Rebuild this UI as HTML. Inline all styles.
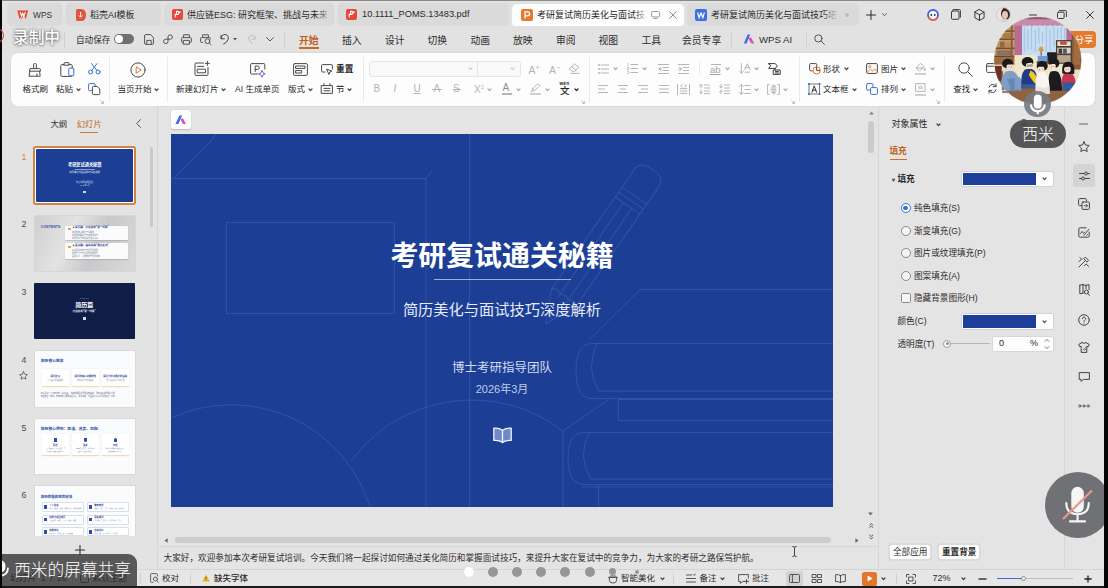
<!DOCTYPE html>
<html lang="zh-CN">
<head>
<meta charset="utf-8">
<title>WPS</title>
<style>
*{box-sizing:border-box;margin:0;padding:0}
html,body{width:1108px;height:588px;overflow:hidden;background:#e5e4e4}
body{font-family:"Liberation Sans","Noto Sans CJK SC",sans-serif;color:#222;position:relative;font-size:9px}
.abs{position:absolute}
.t{position:absolute;white-space:nowrap;line-height:1}
svg{position:absolute;overflow:visible}
/* frame */
#edgeL{left:0;top:0;width:2px;height:588px;background:#050505}
#edgeR{left:1104px;top:0;width:4px;height:588px;background:#050505}
#edgeT{left:0;top:0;width:1108px;height:1px;background:#8a8a8a}
#edgeB{left:0;top:586px;width:1108px;height:2px;background:#1a1a1a}
#titlebar{left:2px;top:1px;width:1102px;height:27px;background:#e3e2e2}
#menubar{left:2px;top:28px;width:1102px;height:25px;background:#e3e2e2}
#ribbon{left:11px;top:52.500px;width:1083.700px;height:53px;background:#fdfdfd;border-radius:7px;box-shadow:0 0 2px rgba(0,0,0,.12)}
/* slide */
#slide{left:171px;top:134px;width:662px;height:373px;background:#1c3f95;overflow:hidden}

.chip{position:absolute;top:3px;height:22.500px;background:#dbdada;border-radius:5px;overflow:hidden}
.tabtx{font-size:9px;color:#2a2a2a;top:10.600px}
.menu{font-size:9.8px;color:#2b2b2b;top:35.800px}
.sepv{position:absolute;width:1px;background:#cfcfcf}
.ic{stroke:#3a3a3a;fill:none;stroke-width:1;stroke-linecap:round;stroke-linejoin:round}
.icg{stroke:#b6b6b6;fill:none;stroke-width:1;stroke-linecap:round;stroke-linejoin:round}

.rl{font-size:8.5px;color:#262626;top:85px}
.chev{position:absolute;width:5px;height:4px}
.b{stroke:#3b6fd6}

.num{font-size:8.800px;color:#4a4a4a;left:20px;width:8px;text-align:center}
.th{position:absolute;left:35px;width:100px;overflow:hidden;border-radius:1px}
.tl{position:absolute;height:1px;background:#9fb0d8}

.pt{font-size:8.600px;color:#2b2b2b}
.radio{position:absolute;left:900.500px;width:10px;height:10px;border-radius:50%;border:1px solid #8a8a8a;background:#f4f4f4}
.st{font-size:8.500px;color:#2b2b2b;top:574px}
.dot{position:absolute;border-radius:50%;background:#969696}
</style>
</head>
<body>
<div class="abs" id="titlebar"></div>
<div class="abs" id="menubar"></div>
<div class="abs" id="ribbon"></div>


<!-- TITLE BAR TABS -->
<div class="chip" style="left:7px;width:55px"></div>
<svg style="left:17px;top:9.500px" width="11.500" height="10" viewBox="0 0 12 11" preserveAspectRatio="none"><path d="M0.3 0.5h11.4l-2.6 9.8-2.2-5.2-1 2.6-1 2.6-1-2.6L2.8 10.3z" fill="#e8452c"/><path d="M3.2 2.2l1.6 4.6L6 3.6l1.2 3.2 1.6-4.6" fill="none" stroke="#fff" stroke-width="1.1"/></svg>
<div class="t tabtx" style="left:33px;font-size:8.400px;top:10.500px;color:#333">WPS</div>

<div class="chip" style="left:66px;width:95px"></div>
<svg style="left:76px;top:9px" width="10" height="12" viewBox="0 0 10 12"><path d="M0 1.5Q0 0 1.5 0H5Q10 0 10 6T5 12H1.5Q0 12 0 10.5z" fill="#e2553b"/><path d="M4.6 3v5M2.8 6.4l1.8 1.8 1.8-1.8" stroke="#fff" stroke-width="1" fill="none"/></svg>
<div class="t tabtx" style="left:90px">稻壳AI模板</div>

<div class="chip" style="left:164px;width:170px"></div>
<svg style="left:172px;top:9px" width="11" height="11" viewBox="0 0 11 11"><rect width="11" height="11" rx="2" fill="#e5473a"/><path d="M3.2 8.6V5.4h2.2a1.5 1.5 0 0 0 0-3H4.6v3" stroke="#fff" stroke-width="1.1" fill="none"/><circle cx="7.6" cy="3.2" r="1" fill="#fff"/></svg>
<div class="t tabtx" style="left:187px;width:140px;overflow:hidden;padding:3px 0;margin-top:-3px">供应链ESG: 研究框架、挑战与未来</div>
<div class="abs" style="left:316px;top:5px;width:18px;height:19px;background:linear-gradient(90deg,rgba(219,218,218,0),#dbdada 80%)"></div>

<div class="chip" style="left:338px;width:171px"></div>
<svg style="left:346px;top:9px" width="11" height="11" viewBox="0 0 11 11"><rect width="11" height="11" rx="2" fill="#e5473a"/><path d="M3.2 8.6V5.4h2.2a1.5 1.5 0 0 0 0-3H4.6v3" stroke="#fff" stroke-width="1.1" fill="none"/><circle cx="7.6" cy="3.2" r="1" fill="#fff"/></svg>
<div class="t tabtx" style="left:362px;font-size:9.25px;top:9.8px">10.1111_POMS.13483.pdf</div>

<div class="abs" style="left:512px;top:4px;width:172px;height:22px;background:#fdfdfd;border-radius:5px 5px 3px 3px"></div>
<svg style="left:521px;top:9px" width="12" height="12" viewBox="0 0 12 12"><rect width="12" height="12" rx="2" fill="#e27a2f"/><path d="M4 9.6V2.8h2.6a2 2 0 0 1 0 4H4" stroke="#fff" stroke-width="1.3" fill="none"/></svg>
<div class="t tabtx" style="left:537px;width:110px;overflow:hidden;padding:3px 0;margin-top:-3px;color:#1f1f1f">考研复试简历美化与面试技巧</div>
<div class="abs" style="left:634px;top:6px;width:16px;height:17px;background:linear-gradient(90deg,rgba(253,253,253,0),#fdfdfd 85%)"></div>
<svg style="left:651px;top:11px" width="9" height="8" viewBox="0 0 9 8"><rect x=".5" y=".5" width="8" height="5.4" rx="1" class="ic" style="stroke:#9a9a9a"/><path d="M3 7.5h3" class="ic" style="stroke:#9a9a9a"/></svg>
<svg style="left:669px;top:11px" width="8" height="8" viewBox="0 0 8 8"><path d="M.7.7l6.6 6.6M7.3.7L.7 7.3" class="ic" style="stroke:#8c8c8c"/></svg>

<div class="chip" style="left:687px;width:172px"></div>
<svg style="left:695px;top:9px" width="12" height="12" viewBox="0 0 12 12"><rect width="12" height="12" rx="2" fill="#3d6fe0"/><path d="M2.6 3.4l1.5 5.2L6 4l1.9 4.6 1.5-5.2" stroke="#fff" stroke-width="1.2" fill="none"/></svg>
<div class="t tabtx" style="left:711px;width:128px;overflow:hidden;padding:3px 0;margin-top:-3px">考研复试简历美化与面试技巧培训</div>
<div class="abs" style="left:822px;top:6px;width:22px;height:17px;background:linear-gradient(90deg,rgba(219,218,218,0),#dbdada 75%)"></div>
<div class="abs" style="left:845px;top:13px;width:4px;height:4px;border-radius:2px;background:#bdbdbd"></div>

<svg style="left:866px;top:10px" width="10" height="10" viewBox="0 0 10 10"><path d="M5 .5v9M.5 5h9" class="ic" style="stroke:#2c2c2c;stroke-width:1"/></svg>
<svg style="left:882px;top:13px" width="5" height="4" viewBox="0 0 5 4"><path d="M.5.7l2 2 2-2" class="ic" style="stroke:#555"/></svg>

<!-- right title icons -->
<svg style="left:927px;top:9px" width="12" height="12" viewBox="0 0 12 12"><circle cx="6" cy="6" r="5" fill="#fff" stroke="#3d5fe0" stroke-width="1.8"/><path d="M1.6 8.4A5 5 0 0 0 10.4 8.4" stroke="#f07030" stroke-width="1.8" fill="none"/><circle cx="4.3" cy="6" r=".9" fill="#223"/><circle cx="7.7" cy="6" r=".9" fill="#223"/></svg>
<svg style="left:951px;top:9px" width="10" height="11" viewBox="0 0 10 11"><rect x=".5" y="2" width="7.5" height="8.3" rx="1" class="ic"/><path d="M2.2.6h6.2q1 0 1 1v6.6" class="ic"/></svg>
<svg style="left:974px;top:9px" width="11" height="12" viewBox="0 0 11 12"><path d="M5.5.6l4.6 2.6v5.6l-4.6 2.6L.9 8.8V3.2zM.9 3.2l4.6 2.6 4.6-2.6M5.5 5.8v5.6" class="ic"/></svg>
<div class="abs" style="left:995.500px;top:7px;width:15px;height:15px;border-radius:7.500px;overflow:hidden;background:#ece6e3;border:.8px solid #cfcaca"><div class="abs" style="left:4.500px;top:-1px;width:11px;height:13px;border-radius:50%;background:#3a2a26"></div><div class="abs" style="left:5.500px;top:3px;width:6px;height:8px;border-radius:50%;background:#e8c4b4"></div><div class="abs" style="left:3px;top:11px;width:10px;height:6px;border-radius:40% 40% 0 0;background:#d9cfd0"></div></div>
<svg style="left:1029px;top:14px" width="8" height="2" viewBox="0 0 8 2"><path d="M.5 1h7" class="ic"/></svg>
<svg style="left:1057px;top:10px" width="10" height="9" viewBox="0 0 10 9"><rect x=".5" y="2.2" width="6.6" height="6.3" rx="1" class="ic"/><path d="M2.6.6h5.8q1 0 1 1v5" class="ic"/></svg>
<svg style="left:1086px;top:11px" width="8" height="8" viewBox="0 0 8 8"><path d="M.6.6l6.8 6.8M7.4.6L.6 7.4" class="ic"/></svg>

<!-- MENU BAR -->
<div class="sepv" style="left:64px;top:32px;height:16px"></div>
<div class="t" style="left:76px;top:35.5px;font-size:8.6px;color:#2b2b2b">自动保存</div>
<div class="abs" style="left:114px;top:34px;width:20px;height:10px;border-radius:5px;background:#707070"></div>
<div class="abs" style="left:115px;top:35px;width:8px;height:8px;border-radius:4px;background:#fff"></div>
<svg style="left:144px;top:34px" width="10" height="11" viewBox="0 0 10 11"><path d="M.6 1.6q0-1 1-1h5l2.8 2.8v6q0 1-1 1H1.6q-1 0-1-1z" class="ic" style="stroke:#555"/><path d="M2.8 10V6.4h4.4V10" class="ic" style="stroke:#555"/></svg>
<svg style="left:163px;top:34px" width="10" height="11" viewBox="0 0 10 11"><path d="M5 5.2V2.8a2.2 2.2 0 1 1 2.2 2.4H2.8A2.2 2.2 0 1 0 5 7.6V5.2" class="ic" style="stroke:#555"/></svg>
<svg style="left:181px;top:34px" width="11" height="11" viewBox="0 0 11 11"><path d="M2.6 3.6V.8h5.8v2.8M2.6 8.4H1.4q-.8 0-.8-.8V4.4q0-.8.8-.8h8.2q.8 0 .8.8v3.2q0 .8-.8.8H8.4M2.6 6.4h5.8v3.8H2.6z" class="ic" style="stroke:#555"/></svg>
<svg style="left:200px;top:34px" width="12" height="11" viewBox="0 0 12 11"><path d="M2.6 3.6V.8h5.8v2.8M2.6 8.4H1.4q-.8 0-.8-.8V4.4q0-.8.8-.8h8.2q.8 0 .8.8v.6" class="ic" style="stroke:#555"/><circle cx="7.4" cy="7.2" r="2.4" class="ic" style="stroke:#555"/><path d="M9.2 9l1.8 1.6" class="ic" style="stroke:#555"/></svg>
<svg style="left:220px;top:34px" width="10" height="11" viewBox="0 0 10 11"><path d="M1.2 4.6A3.6 3.6 0 1 1 8 5.6Q7 8.4 3.6 10.2M1 1.4v3.4h3.4" class="ic" style="stroke:#444"/></svg>
<svg style="left:233px;top:38px" width="4" height="3" viewBox="0 0 4 3"><path d="M0 0h4L2 2.6z" fill="#555"/></svg>
<svg style="left:247px;top:35px" width="9" height="9" viewBox="0 0 9 9"><path d="M7.6 3.8A3 3 0 1 0 2 4.8Q3 7 5.6 8.4M8 1.2v3H5" class="icg" style="stroke:#bdbdbd"/></svg>
<svg style="left:266px;top:37px" width="8" height="5" viewBox="0 0 8 5"><path d="M.6.6L4 4 7.4.6" class="ic" style="stroke:#555"/></svg>
<div class="sepv" style="left:284px;top:33px;height:14px"></div>

<div class="t menu" style="left:299px;color:#c0601c;font-weight:700">开始</div>
<div class="abs" style="left:299px;top:47.400px;width:19.600px;height:1.600px;background:#c76a25"></div>
<div class="t menu" style="left:342px">插入</div>
<div class="t menu" style="left:385px">设计</div>
<div class="t menu" style="left:427.5px">切换</div>
<div class="t menu" style="left:470.5px">动画</div>
<div class="t menu" style="left:513px">放映</div>
<div class="t menu" style="left:556px">审阅</div>
<div class="t menu" style="left:598.5px">视图</div>
<div class="t menu" style="left:641.5px">工具</div>
<div class="t menu" style="left:682px">会员专享</div>
<div class="sepv" style="left:731px;top:33px;height:14px"></div>
<svg style="left:743px;top:34px" width="12" height="10" viewBox="0 0 12 10"><path d="M4.6.6h2.6L3.6 9.4H.8z" fill="#3f6bf0"/><path d="M6 5.2l2-2 3.2 6.2H8.4z" fill="#d64fc8"/><path d="M6.2 4.2L8 7.6" stroke="#f04f7a" stroke-width="1.4"/></svg>
<div class="t menu" style="left:759px;font-size:9.65px;top:35px">WPS AI</div>
<div class="sepv" style="left:806px;top:33px;height:14px"></div>
<svg style="left:814px;top:34px" width="11" height="11" viewBox="0 0 11 11"><circle cx="4.4" cy="4.4" r="3.6" class="ic" style="stroke:#555"/><path d="M7.2 7.2l3.2 3.2" class="ic" style="stroke:#555"/></svg>

<!-- share button -->
<div class="abs" style="left:1058px;top:30.500px;width:38px;height:17px;border-radius:4px;background:#e67a2c"></div>
<div class="t" style="left:1074.500px;top:34.500px;font-size:9.500px;color:#fff">分享</div>


<!-- RIBBON -->
<!-- group 1 -->
<svg style="left:28px;top:63px" width="14" height="14" viewBox="0 0 14 14"><path d="M5.6 5.6V1.6q0-1 1-1h.8q1 0 1 1v4M2.4 5.6h9.2q.8 0 .8.8v1.8H1.6V6.4q0-.8.8-.8zM2 8.2L1 13.2h11.2l-.6-5M9 13v-2.2" class="ic" style="stroke:#4a4a4a"/></svg>
<div class="t rl" style="left:22.5px">格式刷</div>
<svg style="left:60px;top:62px" width="16" height="15" viewBox="0 0 16 15"><path d="M4 2.6H1.8q-1 0-1 1v9.8q0 1 1 1h9.4q1 0 1-1V3.6q0-1-1-1H9M4 1.6q0-1 1-1h3q1 0 1 1v1.6H4z" class="ic" style="stroke:#4a4a4a"/><rect x="8.8" y="6.2" width="5" height="7.6" rx=".8" fill="#fff" stroke="#3b6fd6" stroke-width="1"/></svg>
<div class="t rl" style="left:56px">粘贴</div>
<svg style="left:75.5px;top:88px" width="5" height="4" viewBox="0 0 5 4"><path d="M1 1l1.500 1.500L4 1" fill="none" stroke="#444" stroke-width="1.200" stroke-linecap="round" stroke-linejoin="round"/></svg>
<svg style="left:88px;top:63px" width="13" height="12" viewBox="0 0 13 12"><circle cx="2.6" cy="9" r="2" class="ic b"/><circle cx="10" cy="9" r="2" class="ic b"/><path d="M3.8 7.4L9 .6M8.8 7.4L3.6.6" class="ic b"/></svg>
<svg style="left:88px;top:83px" width="13" height="12" viewBox="0 0 13 12"><path d="M3.4 7.6H1.6q-1 0-1-1V1.6q0-1 1-1h4.6q1 0 1 1v1" class="ic b"/><path d="M4.4 4.4q0-1 1-1h3.8l2.6 2.6v4.6q0 1-1 1H5.4q-1 0-1-1z" class="ic" style="stroke:#4a4a4a"/></svg>
<svg style="left:100px;top:99.5px" width="4" height="4" viewBox="0 0 4 4"><path d="M.3.3l3 3M3.4 1.2v2.2H1.2" fill="none" stroke="#aaa" stroke-width=".8"/></svg>
<div class="sepv" style="left:108.5px;top:57px;height:45px;background:#ebebeb"></div>
<!-- group 2 -->
<svg style="left:130px;top:62px" width="16" height="16" viewBox="0 0 16 16"><circle cx="8" cy="8" r="7.1" class="ic" style="stroke:#4a4a4a"/><path d="M6.2 4.8l5 3.2-5 3.2z" fill="none" stroke="#e0762c" stroke-width="1" stroke-linejoin="round"/></svg>
<div class="t rl" style="left:117.5px">当页开始</div>
<svg style="left:154px;top:88px" width="5" height="4" viewBox="0 0 5 4"><path d="M1 1l1.500 1.500L4 1" fill="none" stroke="#444" stroke-width="1.200" stroke-linecap="round" stroke-linejoin="round"/></svg>
<div class="sepv" style="left:167px;top:57px;height:45px;background:#ebebeb"></div>
<!-- group 3 -->
<svg style="left:194px;top:61px" width="16" height="15" viewBox="0 0 16 15"><path d="M9.6 2H2q-1 0-1 1v10.4q0 1 1 1h11q1 0 1-1V6.4M3.6 5.4h6M3.6 8.2h8v3.6h-8z" class="ic" style="stroke:#4a4a4a"/><path d="M13.4.4v4M11.4 2.4h4" class="ic" style="stroke:#4a4a4a"/></svg>
<div class="t rl" style="left:176px">新建幻灯片</div>
<svg style="left:221px;top:88px" width="5" height="4" viewBox="0 0 5 4"><path d="M1 1l1.500 1.500L4 1" fill="none" stroke="#444" stroke-width="1.200" stroke-linecap="round" stroke-linejoin="round"/></svg>
<svg style="left:250px;top:63px" width="16" height="15" viewBox="0 0 16 15"><path d="M8 11H1.6q-1 0-1-1V1.6q0-1 1-1h12.2q1 0 1 1V6" class="ic" style="stroke:#4a4a4a"/><path d="M5.2 8.6V3h2.4a1.7 1.7 0 0 1 0 3.4H5.2" class="ic" style="stroke:#4a4a4a"/><path d="M12 7.4q.4 3 3.2 3.4-2.8.4-3.2 3.4-.4-3-3.2-3.4 2.800-.4 3.200-3.400z" fill="none" stroke="#5a55e0" stroke-width=".9" stroke-linejoin="round"/></svg>
<div class="t rl" style="left:235px">AI 生成单页</div>
<svg style="left:293px;top:63px" width="15" height="13" viewBox="0 0 15 13"><rect x=".6" y=".6" width="13.800" height="11.800" rx="1.200" class="ic" style="stroke:#4a4a4a"/><rect x="3" y="3" width="9" height="2.400" class="ic" style="stroke:#4a4a4a"/><rect x="3" y="7.600" width="5.600" height="2.400" class="ic" style="stroke:#4a4a4a"/></svg>
<div class="t rl" style="left:288px">版式</div>
<svg style="left:307.5px;top:88px" width="5" height="4" viewBox="0 0 5 4"><path d="M1 1l1.500 1.500L4 1" fill="none" stroke="#444" stroke-width="1.200" stroke-linecap="round" stroke-linejoin="round"/></svg>
<svg style="left:321px;top:64px" width="12" height="11" viewBox="0 0 12 11"><path d="M4 8H1.400q-.8 0-.8-.8V1.400q0-.8.8-.8h9.200q.8 0 .8.8V5" class="ic" style="stroke:#4a4a4a"/><path d="M6 5.200l5 2-2.200.8-.8 2.200z" class="ic" style="stroke:#4a4a4a"/></svg>
<div class="t" style="left:336px;top:64.500px;font-size:8.700px;font-weight:700;color:#262626">重置</div>
<svg style="left:321px;top:83px" width="12" height="11" viewBox="0 0 12 11"><path d="M.6 2.600h10.800v7.800H.6zM3 .6v2M9 .6v2M3 5.400h6M3 7.800h6" class="ic" style="stroke:#4a4a4a"/></svg>
<div class="t rl" style="left:336px">节</div>
<svg style="left:347px;top:88px" width="5" height="4" viewBox="0 0 5 4"><path d="M1 1l1.500 1.500L4 1" fill="none" stroke="#444" stroke-width="1.200" stroke-linecap="round" stroke-linejoin="round"/></svg>
<div class="sepv" style="left:362.500px;top:57px;height:45px;background:#ebebeb"></div>


<!-- font group -->
<div class="abs" style="left:368.500px;top:60.500px;width:152px;height:16px;border:1px solid #e6e6e6;border-radius:3px;background:#f9f9f9"></div>
<div class="abs" style="left:476.500px;top:61px;width:1px;height:15px;background:#e4e4e4"></div>
<svg style="left:467.5px;top:67px" width="5" height="4" viewBox="0 0 5 4"><path d="M1 1l1.500 1.500L4 1" fill="none" stroke="#cfcfcf" stroke-width="1.200" stroke-linecap="round" stroke-linejoin="round"/></svg><svg style="left:510px;top:67px" width="5" height="4" viewBox="0 0 5 4"><path d="M1 1l1.500 1.500L4 1" fill="none" stroke="#cfcfcf" stroke-width="1.200" stroke-linecap="round" stroke-linejoin="round"/></svg>
<div class="t" style="left:373.500px;top:84px;font-size:10px;color:#b4b4b4;font-weight:400">B</div>
<div class="t" style="left:393.500px;top:84px;font-size:10px;color:#b4b4b4;font-style:italic">I</div>
<div class="t" style="left:413.500px;top:84px;font-size:10px;color:#b4b4b4;text-decoration:underline">U</div>
<div class="t" style="left:433.500px;top:84px;font-size:10px;color:#b4b4b4">A</div>
<div class="abs" style="left:432px;top:89px;width:10px;height:1px;background:#b4b4b4"></div>
<div class="t" style="left:453px;top:84px;font-size:10px;color:#b4b4b4">S</div>
<div class="abs" style="left:452.500px;top:89px;width:8px;height:1px;background:#b4b4b4"></div>
<div class="t" style="left:474px;top:84px;font-size:10px;color:#b4b4b4">X<span style="font-size:6px;vertical-align:4px">2</span></div>
<svg style="left:487px;top:88px" width="5" height="4" viewBox="0 0 5 4"><path d="M1 1l1.500 1.500L4 1" fill="none" stroke="#ababab" stroke-width="1.200" stroke-linecap="round" stroke-linejoin="round"/></svg>
<div class="t" style="left:528.500px;top:63.500px;font-size:10.500px;color:#b4b4b4">A<span style="font-size:7px;vertical-align:4px">+</span></div>
<div class="t" style="left:549px;top:63.500px;font-size:10.500px;color:#b4b4b4">A<span style="font-size:7px;vertical-align:4px">−</span></div>
<svg style="left:568px;top:63px" width="12" height="11" viewBox="0 0 12 11"><path d="M4.600 8.400L1 5.800 6.400.8l4.600 3.400-4.400 4.200zM3.400 3.600l4.600 3.400M3 10.400h8" class="icg"/></svg>
<div class="t" style="left:502.500px;top:83px;font-size:10px;color:#8e8e8e">A</div>
<div class="abs" style="left:501.500px;top:93px;width:10px;height:2px;background:#b5b5b5"></div>
<svg style="left:515.5px;top:88px" width="5" height="4" viewBox="0 0 5 4"><path d="M1 1l1.500 1.500L4 1" fill="none" stroke="#ababab" stroke-width="1.200" stroke-linecap="round" stroke-linejoin="round"/></svg>
<svg style="left:530px;top:83px" width="11" height="9" viewBox="0 0 11 9"><path d="M1.600 8.400l1.400-3 5-4.800 2 2-5 4.600zM4 6.600L2.800 5.400" class="icg"/></svg>
<div class="abs" style="left:530px;top:93px;width:11px;height:2px;background:#cfcfcf"></div>
<svg style="left:544.5px;top:88px" width="5" height="4" viewBox="0 0 5 4"><path d="M1 1l1.500 1.500L4 1" fill="none" stroke="#ababab" stroke-width="1.200" stroke-linecap="round" stroke-linejoin="round"/></svg>
<div class="t" style="left:559.500px;top:81.500px;font-size:4.600px;color:#222;font-weight:700;letter-spacing:.3px">wén</div>
<div class="t" style="left:560px;top:86px;font-size:9.500px;color:#222;font-weight:500">文</div>
<svg style="left:573.5px;top:88px" width="5" height="4" viewBox="0 0 5 4"><path d="M1 1l1.500 1.500L4 1" fill="none" stroke="#222" stroke-width="1.200" stroke-linecap="round" stroke-linejoin="round"/></svg><svg style="left:580.5px;top:99.5px" width="4" height="4" viewBox="0 0 4 4"><path d="M.3.3l3 3M3.4 1.2v2.2H1.2" fill="none" stroke="#aaa" stroke-width=".8"/></svg>
<div class="sepv" style="left:589px;top:57px;height:45px;background:#ebebeb"></div>
<!-- paragraph group -->
<svg style="left:598px;top:64px" width="11" height="10" viewBox="0 0 11 10"><path d="M3.400 1h7.200M3.400 5h7.200M3.400 9h7.200" class="icg"/><path d="M.4 1h1.400M.4 5h1.400M.4 9h1.400" class="icg" style="stroke-width:1.400"/></svg>
<svg style="left:613px;top:67px" width="5" height="4" viewBox="0 0 5 4"><path d="M1 1l1.500 1.500L4 1" fill="none" stroke="#ababab" stroke-width="1.200" stroke-linecap="round" stroke-linejoin="round"/></svg>
<svg style="left:627px;top:63px" width="11" height="11" viewBox="0 0 11 11"><path d="M3.800 1.500h6.800M3.800 5.500h6.800M3.800 9.500h6.800" class="icg"/><path d="M1 .2v2.600M.4 4.400h1.200v1.200H.4v1.200h1.200M.4 8.400h1.200v2.400H.4" class="icg" style="stroke-width:.7"/></svg>
<svg style="left:642px;top:67px" width="5" height="4" viewBox="0 0 5 4"><path d="M1 1l1.500 1.500L4 1" fill="none" stroke="#ababab" stroke-width="1.200" stroke-linecap="round" stroke-linejoin="round"/></svg>
<svg style="left:657.500px;top:64px" width="11" height="10" viewBox="0 0 11 10"><path d="M.4.500h10.200M5 3.500h5.600M5 6.500h5.600M.4 9.500h10.200M3 3.200L.8 5 3 6.800M.8 5h3" class="icg"/></svg>
<svg style="left:677.500px;top:64px" width="11" height="10" viewBox="0 0 11 10"><path d="M.4.500h10.200M5.400 3.500h5.200M5.400 6.500h5.200M.4 9.500h10.200M1.600 3.200L3.800 5 1.600 6.800M.6 5h3.200" class="icg"/></svg>
<div class="sepv" style="left:698.500px;top:62px;height:13px;background:#ebebeb"></div>
<div class="t" style="left:710px;top:65px;font-size:9.500px;color:#a4a4a4;text-decoration:underline">ab</div>
<div class="abs" style="left:711px;top:63.500px;width:9.500px;height:1px;background:#b4b4b4"></div>
<svg style="left:725px;top:67px" width="5" height="4" viewBox="0 0 5 4"><path d="M1 1l1.500 1.500L4 1" fill="none" stroke="#ababab" stroke-width="1.200" stroke-linecap="round" stroke-linejoin="round"/></svg>
<svg style="left:739px;top:63px" width="12" height="11" viewBox="0 0 12 11"><path d="M2.400.6v9.600M.4 8.200l2 2 2-2M5.600 6.600L8.400.8l2.800 5.800M6.600 4.600h3.600M6 9.200h4.600" class="icg"/></svg>
<svg style="left:754px;top:67px" width="5" height="4" viewBox="0 0 5 4"><path d="M1 1l1.500 1.500L4 1" fill="none" stroke="#ababab" stroke-width="1.200" stroke-linecap="round" stroke-linejoin="round"/></svg>
<svg style="left:767.500px;top:62.500px" width="13" height="12" viewBox="0 0 13 12"><path d="M.6.600h6.600l2.200 2.400-2.200 2.400H.6l2-2.400zM5.600 7h6.600v4.400H5.600zM7.200 5.400V7M7.400 8.600h3M7.400 10h3" class="ic" style="stroke:#3c3c3c"/></svg>
<svg style="left:598px;top:85px" width="10" height="8" viewBox="0 0 10 8"><path d="M0.0 0.5H10.0M0.0 4.0H7.0M0.0 7.5H10.0" fill="none" stroke="#b6b6b6" stroke-width="1"/></svg><svg style="left:618px;top:85px" width="10" height="8" viewBox="0 0 10 8"><path d="M0.0 0.5H10.0M1.8 4.0H8.2M0.0 7.5H10.0" fill="none" stroke="#b6b6b6" stroke-width="1"/></svg><svg style="left:638px;top:85px" width="10" height="8" viewBox="0 0 10 8"><path d="M0.0 0.5H10.0M3.0 4.0H10.0M0.0 7.5H10.0" fill="none" stroke="#b6b6b6" stroke-width="1"/></svg><svg style="left:658.5px;top:85px" width="10" height="8" viewBox="0 0 10 8"><path d="M0.0 0.5H10.0M0.0 4.0H10.0M0.0 7.5H10.0" fill="none" stroke="#b6b6b6" stroke-width="1"/></svg>
<svg style="left:677px;top:83.500px" width="13" height="11" viewBox="0 0 13 11"><path d="M.5.400v10.200M12.500.400v10.200M3.200 4.600h6.600M3.200 7h6.600M3.200 9.400h6.600M5 .6L3.600 1.800 5 3M8 .6l1.400 1.200L8 3" class="icg"/></svg>
<svg style="left:699px;top:84px" width="11" height="10" viewBox="0 0 11 10"><path d="M5.400 1h5.200M5.400 4h5.200M5.400 7h5.200M5.400 9.600h5.200M2 .4v3.400M.4 2l1.600-1.600L3.600 2M2 9.600V6.200M.4 8l1.600 1.600L3.600 8" class="icg"/></svg>
<svg style="left:718.500px;top:84px" width="11" height="10" viewBox="0 0 11 10"><path d="M5.400 1h5.200M5.400 4h5.200M5.400 7h5.200M5.400 9.600h5.200M2 .4v3.400M.4 2.200l1.600 1.600 1.600-1.600M2 9.600V6.200M.4 7.800L2 6.200l1.600 1.600" class="icg"/></svg>
<svg style="left:739px;top:83.500px" width="12" height="11" viewBox="0 0 12 11"><path d="M5.800 1.500h5.600M5.800 5.500h5.600M5.800 9.500h5.600M2.400.6v9.800M.4 2.600l2-2 2 2M.4 8.400l2 2 2-2" class="icg"/></svg>
<svg style="left:754px;top:88px" width="5" height="4" viewBox="0 0 5 4"><path d="M1 1l1.500 1.500L4 1" fill="none" stroke="#ababab" stroke-width="1.200" stroke-linecap="round" stroke-linejoin="round"/></svg>
<svg style="left:767px;top:83.500px" width="13" height="11" viewBox="0 0 13 11"><path d="M2.400.6H.6v9.800h1.800M10.600.6h1.800v9.800h-1.800M4 4h5M4 5.600h5M4 7.200h5M6.500.8L5 2.400h3zM6.500 10.200L5 8.600h3z" class="icg"/></svg>
<svg style="left:783px;top:88px" width="5" height="4" viewBox="0 0 5 4"><path d="M1 1l1.500 1.500L4 1" fill="none" stroke="#ababab" stroke-width="1.200" stroke-linecap="round" stroke-linejoin="round"/></svg><svg style="left:791px;top:99.5px" width="4" height="4" viewBox="0 0 4 4"><path d="M.3.3l3 3M3.4 1.2v2.2H1.2" fill="none" stroke="#aaa" stroke-width=".8"/></svg>
<div class="sepv" style="left:798.500px;top:57px;height:45px;background:#ebebeb"></div>
<!-- drawing group -->
<svg style="left:808.500px;top:63px" width="12" height="12" viewBox="0 0 12 12"><path d="M3.400 7.800H1.600q-1 0-1-1V1.600q0-1 1-1h5.200q1 0 1 1v1.600" class="ic" style="stroke:#4a4a4a"/><circle cx="7.600" cy="7.400" r="3.600" fill="none" stroke="#e0762c" stroke-width="1"/><path d="M7.600 3.800v3.600h3.600" fill="none" stroke="#4a4a4a" stroke-width="1"/></svg>
<div class="t rl" style="left:823px;top:65px">形状</div>
<svg style="left:843.5px;top:67px" width="5" height="4" viewBox="0 0 5 4"><path d="M1 1l1.500 1.500L4 1" fill="none" stroke="#444" stroke-width="1.200" stroke-linecap="round" stroke-linejoin="round"/></svg>
<svg style="left:808px;top:83px" width="12.500" height="12" viewBox="0 0 12.500 12"><path d="M1 1h10.500v10H1z" fill="none" stroke="#555" stroke-width=".8"/><path d="M3.900 9.300L6.250 2.900l2.350 6.400M4.700 7.200h3.100" class="ic" style="stroke:#333"/><g fill="#3b6fd6"><rect x="0" y="0" width="1.800" height="1.800"/><rect x="10.700" y="0" width="1.800" height="1.800"/><rect x="0" y="10.200" width="1.800" height="1.800"/><rect x="10.700" y="10.200" width="1.800" height="1.800"/></g></svg>
<div class="t rl" style="left:823px">文本框</div>
<svg style="left:852px;top:88px" width="5" height="4" viewBox="0 0 5 4"><path d="M1 1l1.500 1.500L4 1" fill="none" stroke="#444" stroke-width="1.200" stroke-linecap="round" stroke-linejoin="round"/></svg>
<svg style="left:866px;top:63px" width="12" height="11" viewBox="0 0 12 11"><rect x=".6" y=".6" width="10.800" height="9.800" rx="1" class="ic" style="stroke:#4a4a4a"/><circle cx="3.800" cy="3.600" r="1.100" fill="none" stroke="#e0762c" stroke-width=".9"/><path d="M1 9.400l3.400-3.200 2.200 2 2-2.400 2.800 3" fill="none" stroke="#e0762c" stroke-width=".9" stroke-linejoin="round"/></svg>
<div class="t rl" style="left:881px;top:65px">图片</div>
<svg style="left:901px;top:67px" width="5" height="4" viewBox="0 0 5 4"><path d="M1 1l1.500 1.500L4 1" fill="none" stroke="#444" stroke-width="1.200" stroke-linecap="round" stroke-linejoin="round"/></svg>
<svg style="left:866px;top:83px" width="12" height="12" viewBox="0 0 12 12"><rect x=".6" y=".6" width="6.400" height="6.400" rx="1" class="ic b"/><rect x="4.600" y="4.600" width="6.800" height="6.800" rx="1" fill="#fff" stroke="#3b6fd6" stroke-width="1"/></svg>
<div class="t rl" style="left:881px">排列</div>
<svg style="left:901px;top:88px" width="5" height="4" viewBox="0 0 5 4"><path d="M1 1l1.500 1.500L4 1" fill="none" stroke="#444" stroke-width="1.200" stroke-linecap="round" stroke-linejoin="round"/></svg>
<svg style="left:915px;top:62.500px" width="11" height="9" viewBox="0 0 11 9"><path d="M5 .6L1 4.800l3.400 3.400 4.400-4.400zM1.400 5h7M9.800 5.600q1 1.400 0 2.200-1-.8 0-2.200z" class="icg"/></svg>
<div class="abs" style="left:914.500px;top:73px;width:11.500px;height:2px;background:#cfcfcf"></div>
<svg style="left:929.5px;top:67px" width="5" height="4" viewBox="0 0 5 4"><path d="M1 1l1.500 1.500L4 1" fill="none" stroke="#ababab" stroke-width="1.200" stroke-linecap="round" stroke-linejoin="round"/></svg>
<svg style="left:915px;top:83px" width="11" height="9" viewBox="0 0 11 9"><rect x="1" y=".6" width="9" height="7.800" class="icg"/><rect x="3" y="2.600" width="5" height="3.800" fill="#d8d8d8"/></svg>
<div class="abs" style="left:914.500px;top:93.500px;width:11.500px;height:2px;background:#cfcfcf"></div>
<svg style="left:929.5px;top:88px" width="5" height="4" viewBox="0 0 5 4"><path d="M1 1l1.500 1.500L4 1" fill="none" stroke="#ababab" stroke-width="1.200" stroke-linecap="round" stroke-linejoin="round"/></svg><svg style="left:936px;top:99.5px" width="4" height="4" viewBox="0 0 4 4"><path d="M.3.3l3 3M3.4 1.2v2.2H1.2" fill="none" stroke="#aaa" stroke-width=".8"/></svg>
<div class="sepv" style="left:944px;top:57px;height:45px;background:#ebebeb"></div>
<!-- find -->
<svg style="left:958px;top:62px" width="15" height="15" viewBox="0 0 15 15"><circle cx="6" cy="6" r="5.200" class="ic" style="stroke:#4a4a4a"/><path d="M9.800 9.800l4.600 4.600" class="ic" style="stroke:#4a4a4a"/></svg>
<div class="t rl" style="left:953.300px">查找</div>
<svg style="left:973px;top:88px" width="5" height="4" viewBox="0 0 5 4"><path d="M1 1l1.500 1.500L4 1" fill="none" stroke="#444" stroke-width="1.200" stroke-linecap="round" stroke-linejoin="round"/></svg>
<svg style="left:986px;top:63px" width="12" height="10" viewBox="0 0 12 10"><rect x=".6" y=".6" width="10.800" height="8.800" rx="1" class="ic" style="stroke:#4a4a4a"/><path d="M.6 3.200h10.800" class="ic" style="stroke:#4a4a4a"/></svg>
<svg style="left:987px;top:83px" width="11" height="11" viewBox="0 0 11 11"><path d="M2 4.200A3.800 3.800 0 0 1 9 3.400M9 .8v2.800H6.200M9 6.800A3.800 3.800 0 0 1 2 7.600M2 10.200V7.400h2.800" class="ic" style="stroke:#4a4a4a"/></svg>
<div class="t rl" style="left:1001px">替换</div>


<!-- LEFT PANEL -->
<div class="abs" style="left:157px;top:106px;width:1px;height:464px;background:#d6d6d6"></div>
<div class="abs" style="left:2px;top:106px;width:155px;height:464px;background:#e4e3e3"></div>
<div class="t" style="left:50.500px;top:120.300px;font-size:8.400px;color:#333">大纲</div>
<div class="t" style="left:76.800px;top:120.300px;font-size:8.300px;color:#bf6524">幻灯片</div>
<div class="abs" style="left:80.300px;top:131.500px;width:17.700px;height:1.500px;background:#c87a38"></div>
<svg style="left:136px;top:119px" width="5" height="9" viewBox="0 0 5 9"><path d="M4.400.6L.8 4.500l3.600 3.900" class="ic" style="stroke:#555"/></svg>
<div class="abs" style="left:150px;top:147px;width:3px;height:80px;border-radius:1.500px;background:#c9c9c9"></div>

<!-- thumb 1 -->
<div class="t num" style="top:152.500px;color:#cf8a4e">1</div>
<div class="abs" style="left:33.200px;top:146px;width:102.600px;height:59px;border:2px solid #cf8445;border-radius:3px;background:#fdfdfd"></div>
<div class="th" style="left:36px;width:97.400px;top:148.800px;height:53.400px;background:#1c3f95">
  <div class="t" style="left:0;width:97.400px;text-align:center;top:14.500px;font-size:4.200px;color:#fff;font-weight:700">考研复试通关秘籍</div>
  <div class="tl" style="left:38.500px;width:20px;top:20.500px;background:#b9c6e8;opacity:.7"></div>
  <div class="t" style="left:0;width:97.400px;text-align:center;top:23.500px;font-size:2.400px;color:#e8edf8">简历美化与面试技巧深度解析</div>
  <div class="t" style="left:0;width:97.400px;text-align:center;top:32px;font-size:2.200px;color:#d2dbf0">博士考研指导团队</div>
  <div class="t" style="left:0;width:97.400px;text-align:center;top:35.500px;font-size:2px;color:#c2cce8">2026年3月</div>
  <div class="abs" style="left:47.200px;top:42px;width:3px;height:2.500px;background:#cfd8ee"></div>
</div>

<!-- thumb 2 -->
<div class="t num" style="top:220px">2</div>
<div class="th" style="left:33.800px;width:102px;top:215px;height:56.700px;background:linear-gradient(115deg,#cfcfd1 0%,#e3e3e4 35%,#c9c9cb 60%,#dadadb 100%);border:1px solid #d6d6d6">
  <div class="t" style="left:6px;top:9.500px;font-size:3.400px;color:#2a4fa8;font-weight:700;letter-spacing:.1px">CONTENTS</div>
  <div class="abs" style="left:30.700px;top:9.700px;width:62.800px;height:14.800px;background:#fbfbfc;border-radius:1px;box-shadow:0 .5px 1px rgba(0,0,0,.15)"></div>
  <div class="abs" style="left:30.700px;top:26.900px;width:62.800px;height:15.700px;background:#fbfbfc;border-radius:1px;box-shadow:0 .5px 1px rgba(0,0,0,.15)"></div>
  <div class="abs" style="left:33.500px;top:11.500px;width:2.500px;height:2.500px;background:#e9a23a"></div>
  <div class="abs" style="left:33.500px;top:29.500px;width:2.500px;height:2.500px;background:#e9a23a"></div>
  <div class="t" style="left:38px;top:11px;font-size:2.600px;color:#1f3f8f;font-weight:700">■ 简历篇：打造您的“第一印象”</div>
  <div class="t" style="left:36px;top:15.200px;font-size:2px;color:#6a7590">· 简历的核心概念与重要性</div>
  <div class="t" style="left:36px;top:18px;font-size:2px;color:#6a7590">· 简历构成要素与内容规划技巧</div>
  <div class="t" style="left:36px;top:20.800px;font-size:2px;color:#6a7590">· 简历美化与排版设计注意事项</div>
  <div class="t" style="left:38px;top:29px;font-size:2.600px;color:#1f3f8f;font-weight:700">■ 面试篇：临场发挥“赢在交流”</div>
  <div class="t" style="left:36px;top:33.200px;font-size:2px;color:#6a7590">· 复试面试流程与常见题型解析</div>
  <div class="t" style="left:36px;top:36px;font-size:2px;color:#6a7590">· 自我介绍与专业问题应答技巧</div>
  <div class="t" style="left:36px;top:38.800px;font-size:2px;color:#6a7590">· 面试礼仪、心态调整与模拟演练</div>
</div>

<!-- thumb 3 -->
<div class="t num" style="top:287.500px">3</div>
<div class="th" style="left:34.300px;width:100.700px;top:283px;height:56px;background:#0f1d47">
  <div class="t" style="left:0;width:100px;text-align:center;top:13.500px;font-size:2.200px;color:#9fb0dc">PART 01</div>
  <div class="t" style="left:0;width:100px;text-align:center;top:18.500px;font-size:6px;color:#fff;font-weight:700">简历篇</div>
  <div class="t" style="left:0;width:100px;text-align:center;top:28px;font-size:2.600px;color:#e8ecf8;font-weight:700">打造您的“第一印象”</div>
  <div class="abs" style="left:48.500px;top:34px;width:3px;height:2.500px;background:#cfd8ee"></div>
</div>

<!-- thumb 4 -->
<div class="t num" style="top:355.500px">4</div>
<svg style="left:18.500px;top:371px" width="9" height="9" viewBox="0 0 9 9"><path d="M4.500.7l1.200 2.500 2.700.4-2 1.900.5 2.700-2.400-1.300-2.400 1.300.5-2.700-2-1.900 2.700-.4z" class="ic" style="stroke:#555;stroke-width:.8"/></svg>
<div class="th" style="left:33.800px;width:101.800px;top:350px;height:57.500px;background:#fafbfd;border:1px solid #d9d9d9">
  <div class="t" style="left:6px;top:9px;font-size:3.800px;color:#2a4fa8;font-weight:700">简历核心概念</div>
  <div class="abs" style="left:7px;top:18px;width:27px;height:18px;background:#fff;border-bottom:.6px solid #f0dcae;box-shadow:0 0 1px rgba(0,0,0,.12)"></div>
  <div class="abs" style="left:37px;top:18px;width:27px;height:18px;background:#fff;border-bottom:.6px solid #f0dcae;box-shadow:0 0 1px rgba(0,0,0,.12)"></div>
  <div class="abs" style="left:67px;top:18px;width:27px;height:18px;background:#fff;border-bottom:.6px solid #f0dcae;box-shadow:0 0 1px rgba(0,0,0,.12)"></div>
  <div class="t" style="left:7px;width:27px;text-align:center;top:24.500px;font-size:2.400px;color:#1f3f8f;font-weight:700">简历定义</div>
  <div class="t" style="left:37px;width:27px;text-align:center;top:24.500px;font-size:2.400px;color:#1f3f8f;font-weight:700">简历的核心功能特性</div>
  <div class="t" style="left:67px;width:27px;text-align:center;top:24.500px;font-size:2.400px;color:#1f3f8f;font-weight:700">简历与学术潜力的关联</div>
  <div class="t" style="left:7px;width:27px;text-align:center;top:29px;font-size:1.800px;color:#7a849c">个人经历的书面概述</div>
  <div class="t" style="left:37px;width:27px;text-align:center;top:29px;font-size:1.800px;color:#7a849c">信息筛选与自我营销</div>
  <div class="t" style="left:67px;width:27px;text-align:center;top:29px;font-size:1.800px;color:#7a849c">展示科研素养与成长性</div>
  <div class="t" style="left:6px;top:42px;font-size:1.900px;color:#566078">简历是对个人教育背景、科研经历、实践技能及成果的凝练总结，是考研复试中导师了解</div>
  <div class="t" style="left:6px;top:45px;font-size:1.900px;color:#566078">考生的第一窗口。优秀的简历能够突出重点、扬长避短，为面试环节赢得良好的第一印象。</div>
</div>

<!-- thumb 5 -->
<div class="t num" style="top:423.500px">5</div>
<div class="th" style="left:33.800px;width:101.800px;top:418.300px;height:56.700px;background:#fafbfd;border:1px solid #d9d9d9">
  <div class="t" style="left:6px;top:8.500px;font-size:3.800px;color:#2a4fa8;font-weight:700">简历核心原则：简洁、真实、匹配</div>
  <div class="abs" style="left:7px;top:15px;width:27px;height:22px;background:#fff;border-bottom:.6px solid #f0dcae;box-shadow:0 0 1px rgba(0,0,0,.12)"></div>
  <div class="abs" style="left:37px;top:15px;width:27px;height:22px;background:#fff;border-bottom:.6px solid #f0dcae;box-shadow:0 0 1px rgba(0,0,0,.12)"></div>
  <div class="abs" style="left:67px;top:15px;width:27px;height:22px;background:#fff;border-bottom:.6px solid #f0dcae;box-shadow:0 0 1px rgba(0,0,0,.12)"></div>
  <div class="abs" style="left:19px;top:18.500px;width:3px;height:4px;background:#2a4fa8"></div>
  <div class="abs" style="left:49px;top:18.500px;width:3.500px;height:4px;background:#2a4fa8;border-radius:0 0 2px 2px"></div>
  <div class="abs" style="left:79px;top:18.500px;width:3.500px;height:4px;background:#2a4fa8;border-radius:2px 2px 0 0"></div>
  <div class="t" style="left:7px;width:27px;text-align:center;top:25px;font-size:2.200px;color:#1f3f8f;font-weight:700">简洁</div>
  <div class="t" style="left:37px;width:27px;text-align:center;top:25px;font-size:2.200px;color:#1f3f8f;font-weight:700">真实</div>
  <div class="t" style="left:67px;width:27px;text-align:center;top:25px;font-size:2.200px;color:#1f3f8f;font-weight:700">匹配</div>
  <div class="t" style="left:7px;width:27px;text-align:center;top:29px;font-size:1.700px;color:#7a849c">一页纸原则，语言精炼，重</div>
  <div class="t" style="left:7px;width:27px;text-align:center;top:31.500px;font-size:1.700px;color:#7a849c">点突出，避免冗长描述。</div>
  <div class="t" style="left:37px;width:27px;text-align:center;top:29px;font-size:1.700px;color:#7a849c">内容真实可查，不夸大不</div>
  <div class="t" style="left:37px;width:27px;text-align:center;top:31.500px;font-size:1.700px;color:#7a849c">虚构，经得起追问。</div>
  <div class="t" style="left:67px;width:27px;text-align:center;top:29px;font-size:1.700px;color:#7a849c">针对目标院校与导师方向，</div>
  <div class="t" style="left:67px;width:27px;text-align:center;top:31.500px;font-size:1.700px;color:#7a849c">调整内容与侧重点。</div>
</div>

<!-- thumb 6 -->
<div class="t num" style="top:490.500px">6</div>
<div class="th" style="left:33.800px;width:101.800px;top:485px;height:50.500px;background:#fafbfd;border:1px solid #d9d9d9;border-bottom:none">
  <div class="t" style="left:6px;top:9.500px;font-size:3.500px;color:#2a4fa8;font-weight:700">简历的结构性的模块</div>
  <div class="abs" style="left:7px;top:16px;width:42px;height:10px;background:#fff;border:.5px solid #d9deea;border-radius:1px"></div>
  <div class="abs" style="left:52px;top:16px;width:42px;height:10px;background:#fff;border:.5px solid #d9deea;border-radius:1px"></div>
  <div class="abs" style="left:7px;top:28.500px;width:42px;height:10px;background:#fff;border:.5px solid #d9deea;border-radius:1px"></div>
  <div class="abs" style="left:52px;top:28.500px;width:42px;height:10px;background:#fff;border:.5px solid #d9deea;border-radius:1px"></div>
  <div class="abs" style="left:7px;top:41px;width:42px;height:9px;background:#fff;border:.5px solid #d9deea;border-radius:1px"></div>
  <div class="abs" style="left:52px;top:41px;width:42px;height:9px;background:#fff;border:.5px solid #d9deea;border-radius:1px"></div>
  <div class="abs" style="left:9.500px;top:19px;width:3px;height:3.500px;background:#2a4fa8"></div>
  <div class="abs" style="left:54.500px;top:19px;width:3px;height:3.500px;background:#2a4fa8"></div>
  <div class="abs" style="left:9.500px;top:31.500px;width:3px;height:3.500px;background:#2a4fa8"></div>
  <div class="abs" style="left:54.500px;top:31.500px;width:3px;height:3.500px;background:#2a4fa8"></div>
  <div class="abs" style="left:9.500px;top:44px;width:3px;height:3.500px;background:#2a4fa8"></div>
  <div class="abs" style="left:54.500px;top:44px;width:3px;height:3.500px;background:#2a4fa8"></div>
  <div class="t" style="left:14.500px;top:17.500px;font-size:2.300px;color:#1f3f8f;font-weight:700">个人信息</div>
  <div class="t" style="left:14.500px;top:21.500px;font-size:1.700px;color:#7a849c">姓名、电话、邮箱、报考专业、本科院校等</div>
  <div class="t" style="left:59.500px;top:17.500px;font-size:2.300px;color:#1f3f8f;font-weight:700">教育背景</div>
  <div class="t" style="left:59.500px;top:21.500px;font-size:1.700px;color:#7a849c">院校、专业、绩点、排名、核心课程成绩</div>
  <div class="t" style="left:14.500px;top:30px;font-size:2.300px;color:#1f3f8f;font-weight:700">科研与项目经历</div>
  <div class="t" style="left:14.500px;top:34px;font-size:1.700px;color:#7a849c">课题名称、角色、方法、成果、收获</div>
  <div class="t" style="left:59.500px;top:30px;font-size:2.300px;color:#1f3f8f;font-weight:700">获奖情况</div>
  <div class="t" style="left:59.500px;top:34px;font-size:1.700px;color:#7a849c">奖学金、竞赛奖项、荣誉称号、证书</div>
  <div class="t" style="left:14.500px;top:42.500px;font-size:2.300px;color:#1f3f8f;font-weight:700">技能特长</div>
  <div class="t" style="left:14.500px;top:46.500px;font-size:1.700px;color:#7a849c">外语水平、软件工具、实验技能</div>
  <div class="t" style="left:59.500px;top:42.500px;font-size:2.300px;color:#1f3f8f;font-weight:700">自我评价</div>
  <div class="t" style="left:59.500px;top:46.500px;font-size:1.700px;color:#7a849c">科研兴趣、学习规划、个人优势</div>
</div>
<svg style="left:75px;top:544.500px" width="10" height="10" viewBox="0 0 10 10"><path d="M5 .4v9.200M.4 5h9.200" class="ic" style="stroke:#333;stroke-width:1.100"/></svg>

<!-- SLIDE -->
<div class="abs" id="slide">
<svg style="left:0;top:0" width="662" height="373" viewBox="171 134 662 373">
<g fill="none" stroke="#8fa8e8" stroke-opacity=".19" stroke-width="1">
<!-- top-left 3D box -->
<path d="M171 178.500H426M175 177L211 141M426 178.500l6-7.500M426 178.500V507M469.500 134V507"/>
<path d="M211 141L216 134"/>
<rect x="226.500" y="222.500" width="168" height="91"/>
<!-- pencil -->
<g transform="translate(651.500 171) rotate(34.700)">
<path d="M-15 8v146l15 32 15-32V8q0-10-15-10t-15 10zM-15 30h30M-15 36h30M-15 42h30M-5 42v116M5 42v116M-15 154q5-5 10 0 5-5 10 0 5-5 10 0M-4 178h8"/>
</g>
<path d="M833 289.500H640L589 340"/>
<!-- arcs -->
<path d="M171 418A145 145 0 0 1 370 507"/>
<path d="M351 461A150 150 0 0 1 563 431V507"/>
<path d="M563 431L608 400"/>
<!-- books -->
<path d="M833 343.500H592Q576 343.500 576 371T592 398.500H833M597 344Q585 368 599 391H833"/>
<path d="M833 399.500H618.500V420.500H833"/>
<path d="M833 432.500H584Q568 432.500 568 458.500T584 484.500H833M589 433Q577 456 591 479H833"/>
<path d="M598.500 485V507M833 487H582"/>
</g>
</svg>
<div class="t" style="left:0;width:662px;text-align:center;top:109px;font-size:27.900px;font-weight:700;color:#fff">考研复试通关秘籍</div>
<div class="abs" style="left:262.500px;top:144.500px;width:137px;height:1px;background:#b4c2e6;opacity:.85"></div>
<div class="t" style="left:0;width:662px;text-align:center;top:167.500px;font-size:15.250px;color:#e6ebf8">简历美化与面试技巧深度解析</div>
<div class="t" style="left:0;width:662px;text-align:center;top:228px;font-size:12.500px;color:#d3dbf0">博士考研指导团队</div>
<div class="t" style="left:0;width:662px;text-align:center;top:249.500px;font-size:11px;color:#c0cbe8">2026年3月</div>
<svg style="left:321.500px;top:292.500px" width="19" height="17" viewBox="0 0 19 17"><path d="M9.500 3.200Q6 .8.800 1.200v12.200q5.200-.4 8.700 2 3.500-2.400 8.700-2V1.200q-5.200-.4-8.700 2z" fill="#8ea4d8" fill-opacity=".75" stroke="#f2f5fc" stroke-width="1.300" stroke-linejoin="round"/><path d="M9.500 3.200v13" stroke="#f2f5fc" stroke-width="1.300"/></svg>
</div>


<!-- AI floating icon -->
<div class="abs" style="left:171px;top:110px;width:19.500px;height:19px;border-radius:2.500px;background:#fdfdfd;box-shadow:0 .5px 1.500px rgba(0,0,0,.18)"></div>
<svg style="left:175px;top:114.500px" width="12" height="10" viewBox="0 0 12 10"><path d="M4.400.4h2.800L3.400 9H.4z" fill="#3f6bf0"/><path d="M6 4.800l1.800-1.800L11 9H8z" fill="#d64fc8"/><path d="M6.200 4L8 7.400" stroke="#f0508a" stroke-width="1.300"/></svg>

<!-- vertical scrollbar (slide) -->
<svg style="left:868.500px;top:110.500px" width="5" height="4" viewBox="0 0 5 4"><path d="M2.500.4L4.800 3.600H.2z" fill="#808080"/></svg>
<div class="abs" style="left:868px;top:121px;width:5.600px;height:31.500px;border-radius:2.800px;background:#cbcbcb"></div>
<svg style="left:868px;top:511.500px" width="5" height="4" viewBox="0 0 5 4"><path d="M2.500 3.600L4.800.4H.2z" fill="#666"/></svg>
<svg style="left:868.500px;top:523px" width="4.500" height="5.500" viewBox="0 0 5 7" preserveAspectRatio="none"><path d="M.4 3L2.500.8 4.600 3M.4 6L2.500 3.800 4.600 6" fill="none" stroke="#555" stroke-width="1.100"/></svg>
<svg style="left:868.500px;top:534px" width="4.500" height="5.500" viewBox="0 0 5 7" preserveAspectRatio="none"><path d="M.4 1L2.500 3.200 4.600 1M.4 4L2.500 6.200 4.600 4" fill="none" stroke="#555" stroke-width="1.100"/></svg>
<!-- horizontal scrollbar -->
<svg style="left:163.500px;top:537.500px" width="4" height="5" viewBox="0 0 4 5"><path d="M.4 2.500L3.600.2v4.600z" fill="#666"/></svg>
<div class="abs" style="left:175px;top:537px;width:656px;height:5.500px;border-radius:2.750px;background:#cdcdcd"></div>
<svg style="left:854.500px;top:537.500px" width="4" height="5" viewBox="0 0 4 5"><path d="M3.600 2.500L.4.200v4.600z" fill="#666"/></svg>
<!-- notes -->
<div class="abs" style="left:158px;top:546px;width:720px;height:1px;background:#d6d6d6"></div>
<div class="t" style="left:163.500px;top:553.500px;font-size:8.630px;color:#2e2e2e">大家好，欢迎参加本次考研复试培训。今天我们将一起探讨如何通过美化简历和掌握面试技巧，来提升大家在复试中的竞争力，为大家的考研之路保驾护航。</div>
<svg style="left:791.500px;top:545.500px" width="5" height="11" viewBox="0 0 5 11"><path d="M.4.500Q2.500.5 2.500 1.800V9.200Q2.500 10.500.4 10.500M4.600.5Q2.500.5 2.500 1.800M2.500 9.200Q2.500 10.500 4.600 10.500" fill="none" stroke="#333" stroke-width=".9"/></svg>

<!-- RIGHT PANEL -->
<div class="abs" style="left:877.500px;top:106px;width:1px;height:464px;background:#d8d8d8"></div>
<div class="t pt" style="left:891.500px;top:119.500px;font-size:9px">对象属性</div>
<svg style="left:936px;top:122.5px" width="5" height="4" viewBox="0 0 5 4"><path d="M1 1l1.500 1.500L4 1" fill="none" stroke="#444" stroke-width="1.200" stroke-linecap="round" stroke-linejoin="round"/></svg>
<svg style="left:1020px;top:119px" width="8" height="9" viewBox="0 0 8 9"><path d="M2.400.6h3.200l-.4 3.200L6.800 5.600H1.200L2.800 3.800zM4 5.600v3" class="ic" style="stroke:#555;stroke-width:.9"/></svg>
<svg style="left:1040.500px;top:120px" width="7" height="7" viewBox="0 0 7 7"><path d="M.5.500l6 6M6.500.500l-6 6" class="ic" style="stroke:#555;stroke-width:.9"/></svg>
<div class="t pt" style="left:889.500px;top:146.500px;color:#bf6524;font-weight:700">填充</div>
<div class="abs" style="left:889.500px;top:158.500px;width:17.500px;height:1.500px;background:#c9712e"></div>
<svg style="left:890.500px;top:177.500px" width="5" height="4.500" viewBox="0 0 4 4"><path d="M.2.600h3.600L2 3.600z" fill="#555"/></svg>
<div class="t pt" style="left:897.500px;top:175px;font-weight:700">填充</div>
<div class="abs" style="left:960.500px;top:170.500px;width:93px;height:16.500px;background:#fdfdfd;border:1px solid #d2d2d2;border-radius:2px"></div>
<div class="abs" style="left:962.500px;top:172.500px;width:73.500px;height:12.500px;background:#1d3f99"></div>
<svg style="left:1042px;top:177px" width="5" height="4" viewBox="0 0 5 4"><path d="M1 1l1.500 1.500L4 1" fill="none" stroke="#555" stroke-width="1.200" stroke-linecap="round" stroke-linejoin="round"/></svg>
<div class="radio" style="top:203.300px;border-color:#3b6fd6;background:#fff"></div><div class="abs" style="left:903.300px;top:206.100px;width:4.400px;height:4.400px;border-radius:2.200px;background:#3b6fd6"></div>
<div class="t pt" style="left:914px;top:204px">纯色填充(S)</div>
<div class="radio" style="top:225.700px"></div>
<div class="t pt" style="left:914px;top:226.500px">渐变填充(G)</div>
<div class="radio" style="top:248px"></div>
<div class="t pt" style="left:914px;top:249px">图片或纹理填充(P)</div>
<div class="radio" style="top:270.600px"></div>
<div class="t pt" style="left:914px;top:271.500px">图案填充(A)</div>
<div class="abs" style="left:901px;top:293px;width:10px;height:10px;border:1px solid #8a8a8a;border-radius:1.500px;background:#f6f6f6"></div>
<div class="t pt" style="left:914px;top:294px">隐藏背景图形(H)</div>
<div class="t pt" style="left:897.500px;top:316.800px">颜色(C)</div>
<div class="abs" style="left:960.500px;top:313px;width:93px;height:16.500px;background:#fdfdfd;border:1px solid #d2d2d2;border-radius:2px"></div>
<div class="abs" style="left:962.500px;top:315px;width:73.500px;height:12.500px;background:#1d3f99"></div>
<svg style="left:1042px;top:319.5px" width="5" height="4" viewBox="0 0 5 4"><path d="M1 1l1.500 1.500L4 1" fill="none" stroke="#555" stroke-width="1.200" stroke-linecap="round" stroke-linejoin="round"/></svg>
<div class="t pt" style="left:897.500px;top:339.500px">透明度(T)</div>
<div class="abs" style="left:947px;top:343px;width:43px;height:1px;background:#b5b5b5"></div>
<div class="abs" style="left:943px;top:339.500px;width:8px;height:8px;border-radius:4px;background:#fff;border:1px solid #9a9a9a"></div>
<div class="abs" style="left:945.500px;top:342px;width:3px;height:3px;border-radius:1.500px;background:#8a8a8a"></div>
<div class="abs" style="left:991.500px;top:335.500px;width:62px;height:16.500px;background:#fdfdfd;border:1px solid #d8d8d8;border-radius:2px"></div>
<div class="t pt" style="left:999px;top:339px;font-size:9px">0</div>
<div class="t pt" style="left:1030px;top:339px;font-size:9px">%</div>
<svg style="left:1044px;top:338px" width="6" height="12" viewBox="0 0 6 12"><path d="M.8 3.600L3 1.400 5.200 3.600M.8 8.400L3 10.600 5.200 8.400" fill="none" stroke="#666" stroke-width=".9"/></svg>
<div class="abs" style="left:889px;top:543.500px;width:42.300px;height:16.500px;background:#fdfdfd;border:.5px solid #dcdcdc;border-radius:3px;box-shadow:0 0 1.500px rgba(0,0,0,.18)"></div>
<div class="t pt" style="left:893px;top:548px">全部应用</div>
<div class="abs" style="left:938px;top:543.500px;width:42px;height:16.500px;background:#fdfdfd;border:.5px solid #dcdcdc;border-radius:3px;box-shadow:0 0 1.500px rgba(0,0,0,.18)"></div>
<div class="t pt" style="left:942px;top:548px;font-weight:700">重置背景</div>

<!-- right icon column -->
<div class="abs" style="left:1064px;top:106px;width:1px;height:463px;background:#d6d6d6"></div>
<svg style="left:1079px;top:122.500px" width="9" height="2" viewBox="0 0 9 2"><path d="M.5 1h8" class="ic" style="stroke:#666"/></svg>
<svg style="left:1078px;top:141px" width="12" height="11" viewBox="0 0 12 11"><path d="M6 .7l1.600 3.300 3.600.5-2.600 2.500.6 3.600L6 8.900l-3.200 1.700.6-3.600L.8 4.500l3.600-.5z" class="ic" style="stroke:#444"/></svg>
<div class="abs" style="left:1073px;top:164px;width:22px;height:23px;border-radius:3px;background:#d4d4d4"></div>
<svg style="left:1078.500px;top:170.500px" width="11" height="10" viewBox="0 0 11 10"><path d="M.5 2.500h5M8.500 2.500h2M.5 7.500h2M5.500 7.500h5" class="ic" style="stroke:#444"/><circle cx="7" cy="2.500" r="1.500" class="ic" style="stroke:#444"/><circle cx="4" cy="7.500" r="1.500" class="ic" style="stroke:#444"/></svg>
<svg style="left:1078px;top:198px" width="12" height="12" viewBox="0 0 12 12"><path d="M3.400 7.600H1.600q-1 0-1-1V1.600q0-1 1-1h5.800q1 0 1 1v1.200" class="ic" style="stroke:#444"/><rect x="4" y="4" width="7.400" height="7.400" rx="1" class="ic" style="stroke:#444"/><path d="M6 7.700h3.400M8.200 6.200l1.400 1.500-1.400 1.500" class="ic" style="stroke:#444;stroke-width:.8"/></svg>
<svg style="left:1078px;top:227px" width="12" height="11" viewBox="0 0 12 11"><path d="M8 .8H2.200q-1.400 0-1.400 1.400v6.600q0 1.400 1.400 1.400h7.600q1.400 0 1.400-1.400V5" class="ic" style="stroke:#444"/><path d="M2.600 6.600l1.600-2.200 1.400 2 1.200-1.400M6 8.400l4.800-6.200M8.800 8.200l1-1" class="ic" style="stroke:#444;stroke-width:.9"/></svg>
<svg style="left:1078px;top:255.500px" width="12" height="12" viewBox="0 0 12 12"><path d="M1 11L7 5M7.600 1.400l3 3-1.600 1.600-3-3zM2 1.600l1.400 1.400M1 5.600l2.600-2.600M8.400 8.200l2.200 2.200M6.600 9.400l1.800-1.200" class="ic" style="stroke:#444"/></svg>
<svg style="left:1078.500px;top:284px" width="11" height="12" viewBox="0 0 11 12"><path d="M.8 1.200L4 .6l3 .8 3-.8v5M4 .6v8.600M.8 1.200v8.600L4 9.200M7 1.400v3.200" class="ic" style="stroke:#444"/><circle cx="7.400" cy="8" r="2" class="ic" style="stroke:#444"/><path d="M8.800 9.600l1.600 1.800" class="ic" style="stroke:#444"/></svg>
<svg style="left:1078px;top:313.500px" width="12" height="12" viewBox="0 0 12 12"><circle cx="6" cy="6" r="5.300" class="ic" style="stroke:#444"/><path d="M4.400 4.600a1.600 1.600 0 1 1 2.400 1.400q-.8.500-.8 1.400M6 9v.3" class="ic" style="stroke:#444"/></svg>
<svg style="left:1078px;top:342px" width="12" height="11" viewBox="0 0 12 11"><path d="M4 .6L.8 2.400l1 2.400 1.400-.6v6.200h5.600V4.200l1.400.6 1-2.400L8 .6Q6 2.200 4 .6z" class="ic" style="stroke:#444"/><path d="M5 8l2.600-2.400M6.800 8.200l1-1" class="ic" style="stroke:#444;stroke-width:.8"/></svg>
<svg style="left:1078.500px;top:371.500px" width="11" height="10" viewBox="0 0 11 10"><path d="M.6.600h9.800v6.800H4.400L2 9.400V7.400H.6z" class="ic" style="stroke:#444"/></svg>
<svg style="left:1078px;top:403.500px" width="12" height="4" viewBox="0 0 12 4"><circle cx="1.800" cy="2" r="1.100" class="ic" style="stroke:#444;stroke-width:.8"/><circle cx="6" cy="2" r="1.100" class="ic" style="stroke:#444;stroke-width:.8"/><circle cx="10.200" cy="2" r="1.100" class="ic" style="stroke:#444;stroke-width:.8"/></svg>


<!-- STATUS BAR -->
<div class="abs" style="left:2px;top:569px;width:1102px;height:1px;background:#d4d4d4"></div>
<div class="abs" style="left:2px;top:570px;width:1102px;height:16.500px;background:#e7e6e6"></div>
<div class="t st" style="left:10px;word-spacing:2px;font-size:8.800px">幻灯片 1 / 26</div>
<div class="sepv" style="left:72px;top:573px;height:11px"></div>
<svg style="left:80px;top:573.500px" width="9" height="9" viewBox="0 0 9 9"><rect x=".5" y=".5" width="8" height="8" rx="1" class="ic" style="stroke:#555"/></svg>
<div class="t st" style="left:93px">默认主题</div>
<div class="sepv" style="left:140px;top:573px;height:11px"></div>
<svg style="left:149.500px;top:573px" width="9" height="10" viewBox="0 0 9 10"><path d="M3 9.400H1.400q-.8 0-.8-.8V1.400q0-.8.8-.8h5.200q.8 0 .8.8V3" class="ic" style="stroke:#555;stroke-width:.9"/><circle cx="5.400" cy="6" r="2" class="ic" style="stroke:#555;stroke-width:.9"/><path d="M6.800 7.600l1.600 1.800" class="ic" style="stroke:#555;stroke-width:.9"/></svg>
<div class="t st" style="left:162px">校对</div>
<div class="sepv" style="left:189.500px;top:573px;height:11px"></div>
<svg style="left:201.500px;top:574px" width="8" height="8" viewBox="0 0 8 8"><path d="M4 .4L7.800 7.400H.2z" fill="#f0b429"/><path d="M4 2.800v2.400M4 6v.6" stroke="#7a4a00" stroke-width=".9"/></svg>
<div class="t st" style="left:214px;font-weight:500">缺失字体</div>

<svg style="left:608px;top:573.500px" width="10" height="10" viewBox="0 0 10 10"><path d="M1.400 3.400v3q0 2.600 3.600 2.600t3.600-2.600v-3zM.6 3.400h8.800M3 1.200q.8-.8 1.600 0M6 1.400q.6-.6 1.200 0" class="ic" style="stroke:#444;stroke-width:.9"/></svg>
<div class="t st" style="left:621px">智能美化</div>
<svg style="left:659.5px;top:577px" width="5" height="4" viewBox="0 0 5 4"><path d="M1 1l1.500 1.500L4 1" fill="none" stroke="#444" stroke-width="1.200" stroke-linecap="round" stroke-linejoin="round"/></svg>
<div class="sepv" style="left:673px;top:573px;height:11px"></div>
<svg style="left:686px;top:574px" width="10" height="9" viewBox="0 0 10 9"><path d="M.5 1h5M7 .4l1 1 1.400-1.200M.5 4.500h9M.5 8h9" class="ic" style="stroke:#444;stroke-width:.9"/></svg>
<div class="t st" style="left:699.500px">备注</div>
<svg style="left:719.5px;top:577px" width="5" height="4" viewBox="0 0 5 4"><path d="M1 1l1.500 1.500L4 1" fill="none" stroke="#444" stroke-width="1.200" stroke-linecap="round" stroke-linejoin="round"/></svg>
<svg style="left:738px;top:573.500px" width="11" height="10" viewBox="0 0 11 10"><path d="M10.400 4V.6H.6v6.800h1.800v2l2.400-2h2M8.600 5.400v4M6.600 7.400h4" class="ic" style="stroke:#444;stroke-width:.9"/></svg>
<div class="t st" style="left:752px">批注</div>
<div class="abs" style="left:785.500px;top:570.500px;width:17px;height:15.500px;background:#d3d3d3;border-radius:2px"></div>
<svg style="left:789px;top:573.500px" width="11" height="9" viewBox="0 0 11 9"><rect x=".5" y=".5" width="10" height="8" rx="1" class="ic" style="stroke:#444;stroke-width:.9"/><path d="M3.400.6v7.800" class="ic" style="stroke:#444;stroke-width:.9"/></svg>
<svg style="left:812px;top:573.500px" width="10" height="9" viewBox="0 0 10 9"><rect x=".5" y=".5" width="3.600" height="3" class="ic" style="stroke:#444;stroke-width:.9"/><rect x="5.900" y=".5" width="3.600" height="3" class="ic" style="stroke:#444;stroke-width:.9"/><rect x=".5" y="5.500" width="3.600" height="3" class="ic" style="stroke:#444;stroke-width:.9"/><rect x="5.900" y="5.500" width="3.600" height="3" class="ic" style="stroke:#444;stroke-width:.9"/></svg>
<svg style="left:834.500px;top:573.500px" width="11" height="9" viewBox="0 0 11 9"><path d="M5.500 1.600Q3.400.2.600.6v7q2.800-.4 4.900 1 2.100-1.400 4.900-1v-7Q7.600.2 5.500 1.600zM5.500 1.600v7" class="ic" style="stroke:#444;stroke-width:.9"/></svg>
<div class="abs" style="left:862px;top:571.500px;width:14.500px;height:14px;background:#e2762c;border-radius:2.500px"></div>
<svg style="left:866.500px;top:575px" width="6" height="7" viewBox="0 0 6 7"><path d="M.6.500l5 3-5 3z" fill="#fff"/></svg>
<svg style="left:881px;top:577px" width="5" height="4" viewBox="0 0 5 4"><path d="M1 1l1.500 1.500L4 1" fill="none" stroke="#444" stroke-width="1.200" stroke-linecap="round" stroke-linejoin="round"/></svg>
<div class="sepv" style="left:895.500px;top:573px;height:11px"></div>
<svg style="left:905.500px;top:573.500px" width="10" height="10" viewBox="0 0 10 10"><path d="M.5 3V.5H3M7 .5h2.500V3M9.500 7v2.500H7M3 9.500H.5V7" class="ic" style="stroke:#444;stroke-width:.9"/><rect x="3" y="3" width="4" height="4" class="ic" style="stroke:#444;stroke-width:.9"/></svg>
<div class="t st" style="left:932.500px;font-size:9px;top:573.500px">72%</div>
<svg style="left:960.5px;top:577px" width="5" height="4" viewBox="0 0 5 4"><path d="M1 1l1.500 1.500L4 1" fill="none" stroke="#444" stroke-width="1.200" stroke-linecap="round" stroke-linejoin="round"/></svg>
<svg style="left:978px;top:577.500px" width="9" height="2" viewBox="0 0 9 2"><path d="M.5 1h8" stroke="#222" stroke-width="1.300"/></svg>
<div class="abs" style="left:997px;top:578px;width:76px;height:1px;background:#bdbdbd"></div>
<div class="abs" style="left:997px;top:577.500px;width:26px;height:1.500px;background:#3b6fd6"></div>
<div class="abs" style="left:1020.500px;top:575.500px;width:5.500px;height:5.500px;border-radius:3px;background:#fff;border:1px solid #8a8a8a"></div>
<svg style="left:1083.500px;top:574.500px" width="8" height="8" viewBox="0 0 8 8"><path d="M4 .4v7.200M.4 4h7.200" stroke="#222" stroke-width="1.300"/></svg>

<!-- pagination dots overlay -->
<div class="dot" style="left:463.500px;top:566.500px;width:10.500px;height:10.500px;background:#fdfdfd"></div>
<div class="dot" style="left:487.500px;top:566.500px;width:10px;height:10px"></div>
<div class="dot" style="left:511.500px;top:566.500px;width:10px;height:10px"></div>
<div class="dot" style="left:536px;top:566.500px;width:10px;height:10px"></div>
<div class="dot" style="left:560px;top:566.500px;width:10px;height:10px"></div>
<div class="dot" style="left:584.500px;top:566.500px;width:10px;height:10px"></div>
<div class="dot" style="left:609px;top:568px;width:7px;height:7px"></div>
<div class="dot" style="left:635px;top:569.500px;width:4px;height:4px"></div>

<!-- OVERLAYS -->
<!-- screen share label -->
<div class="abs" style="left:0;top:553.800px;width:136.800px;height:32.700px;background:rgba(46,46,46,.77);border-radius:0 9px 0 0"></div>
<svg style="left:0;top:556px" width="12" height="26" viewBox="0 556 12 26"><rect x="-4" y="560.500" width="9.400" height="11.800" rx="4.700" fill="#fff"/><path d="M-6.500 568.500a7.200 7.200 0 0 0 14.400 0M.7 575.700v3" fill="none" stroke="#fff" stroke-width="1.900" stroke-linecap="round"/></svg>
<div class="t" style="left:14.200px;top:563.400px;font-size:16.700px;font-weight:300;color:#fff">西米的屏幕共享</div>

<!-- recording label -->
<div class="abs" style="left:-10px;top:28px;width:14px;height:15px;border:1px solid #d9503f;border-radius:50%;z-index:5"></div>
<div class="t" style="left:13px;top:29.500px;font-size:15.700px;font-weight:500;color:#fff;text-shadow:0 0 4px rgba(0,0,0,.38),0 0 2px rgba(0,0,0,.35),0 1px 2px rgba(0,0,0,.25)">录制中</div>


<!-- avatar video bubble -->
<svg style="left:990px;top:14.400px" width="96" height="96" viewBox="0 0 588 588">
<defs><clipPath id="avc"><circle cx="292" cy="285" r="268"/></clipPath></defs>
<g clip-path="url(#avc)">
<rect x="0" y="0" width="588" height="588" fill="#eadfc2"/>
<!-- left shelves -->
<rect x="0" y="40" width="152" height="270" fill="#c09863"/>
<rect x="20" y="100" width="132" height="9" fill="#7a4a2a"/><rect x="20" y="150" width="132" height="9" fill="#7a4a2a"/><rect x="20" y="205" width="132" height="10" fill="#7a4a2a"/><rect x="20" y="255" width="132" height="10" fill="#6d4226"/>
<rect x="80" y="118" width="50" height="32" fill="#a97a4c"/><rect x="60" y="170" width="30" height="35" fill="#8d6b4a"/><rect x="96" y="176" width="40" height="29" fill="#b58a5c"/><rect x="40" y="222" width="90" height="32" fill="#8a735e"/>
<rect x="20" y="265" width="132" height="50" fill="#9b6c42"/>
<rect x="128" y="60" width="10" height="250" fill="#8a5a34"/>
<!-- window -->
<rect x="190" y="62" width="285" height="192" fill="#c6def3"/>
<g stroke="#7f9cc6" stroke-width="4" opacity=".75" stroke-linecap="round"><path d="M210 80v150M232 95v120M255 75v140M278 100v130M300 85v90M322 110v70M345 80v150M368 95v130M392 78v120M414 90v60M436 82v70M458 90v100"/></g>
<rect x="150" y="50" width="46" height="205" fill="#b76c93"/>
<rect x="468" y="60" width="34" height="150" fill="#b76c93"/>
<path d="M148 24h376v44q-15 12-31 0-16 12-31 0-16 12-32 0-15 12-31 0-16 12-31 0-16 12-32 0-15 12-31 0-16 12-31 0-16 12-32 0-15 12-31 0-16 12-31 0-16 12-32 0z" fill="#c98ca8"/>
<rect x="148" y="18" width="376" height="14" fill="#935573"/>
<!-- right door -->
<rect x="500" y="90" width="90" height="250" fill="#8b5a34"/>
<rect x="512" y="120" width="40" height="190" fill="#a06c40"/>
<!-- floor -->
<rect x="150" y="252" width="352" height="200" fill="#efe6cb"/>
<rect x="0" y="310" width="150" height="60" fill="#e8dcc0"/>
<rect x="0" y="440" width="588" height="150" fill="#8e6342"/>
<rect x="0" y="350" width="80" height="100" fill="#9a6d48"/><rect x="30" y="318" width="42" height="92" fill="#6e2c24"/>
<!-- rack -->
<rect x="404" y="160" width="98" height="145" fill="#4a3b36"/>
<rect x="412" y="168" width="82" height="28" fill="#e8dccb"/><rect x="430" y="168" width="40" height="20" fill="#c4473c"/>
<rect x="412" y="206" width="82" height="36" fill="#d9d2c6"/><rect x="420" y="212" width="22" height="30" fill="#3a3a40"/><rect x="448" y="212" width="22" height="30" fill="#55555c"/>
<rect x="412" y="252" width="82" height="46" fill="#b8a58c"/>
<!-- lamp, tv, monitor -->
<path d="M296 226h34l-8-26h-18z" fill="#dc9a40"/><rect x="310" y="226" width="6" height="30" fill="#6b4a2a"/>
<rect x="350" y="234" width="58" height="58" rx="4" fill="#1d1f24"/>
<rect x="292" y="256" width="60" height="36" fill="#6d9be0"/><rect x="286" y="290" width="130" height="14" fill="#5a4030"/>
<!-- person 1 denim -->
<path d="M68 470q-8-90 30-118 30-12 56 6 34 36 36 112z" fill="#7f9dc6"/>
<path d="M100 400q30 30 20 70h60q10-50-20-80z" fill="#6787b4"/>
<path d="M150 392q30-20 42 10v60h-40z" fill="#7f9dc6"/>
<ellipse cx="108" cy="304" rx="34" ry="30" fill="#1b191c"/><ellipse cx="122" cy="324" rx="21" ry="20" fill="#f7e3d2"/><path d="M100 308q20 4 42-4l-4-10h-36z" fill="#1b191c"/><circle cx="116" cy="324" r="2.500" fill="#222"/><circle cx="132" cy="322" r="2.500" fill="#222"/>
<circle cx="128" cy="330" r="5" fill="#f2b7a8"/>
<!-- person 2 navy/yellow -->
<path d="M192 450q-6-80 20-108 30-14 58 2 26 30 26 106z" fill="#1f3c88"/>
<path d="M248 346q34 14 46 66l-20 14q-22-28-36-52z" fill="#f3c81e"/>
<path d="M196 430h96v26h-100z" fill="#3a5a96"/>
<ellipse cx="230" cy="294" rx="36" ry="30" fill="#1b191c"/><ellipse cx="242" cy="316" rx="22" ry="21" fill="#f7e3d2"/><path d="M218 300q22 4 46-6l-4-10h-40z" fill="#1b191c"/><rect x="228" y="312" width="13" height="9" rx="2" fill="none" stroke="#222" stroke-width="2.500"/><rect x="246" y="311" width="13" height="9" rx="2" fill="none" stroke="#222" stroke-width="2.500"/>
<!-- person 4 black -->
<path d="M358 470q-4-90 12-116 26-12 48 2 24 30 24 114z" fill="#1c1b20"/>
<ellipse cx="392" cy="302" rx="33" ry="30" fill="#1b191c"/><ellipse cx="382" cy="322" rx="21" ry="20" fill="#f7e3d2"/><path d="M360 306q22 4 44-4l-4-10h-38z" fill="#1b191c"/><circle cx="374" cy="322" r="2.500" fill="#222"/><circle cx="390" cy="322" r="2.500" fill="#222"/>
<circle cx="376" cy="330" r="5" fill="#f2b7a8"/>
<!-- person 5 red -->
<path d="M438 440q-2-60 20-78 26-10 46 4 22 26 22 74z" fill="#c9354e"/>
<path d="M446 420h78l6 52h-82z" fill="#2f5aa0"/>
<path d="M444 366q-10-76 36-74 42 0 36 76z" fill="#1b191c"/><ellipse cx="474" cy="338" rx="20" ry="20" fill="#f7e3d2"/><path d="M452 326q22 0 44-8l-6-12h-34z" fill="#1b191c"/><circle cx="466" cy="338" r="2.500" fill="#222"/><circle cx="482" cy="337" r="2.500" fill="#222"/>
<circle cx="466" cy="346" r="5" fill="#f2b7a8"/>
<!-- person 3 white -->
<path d="M280 490q-6-100 12-130 26-12 50 2 24 30 24 128z" fill="#f7f5f0"/>
<path d="M284 440q40 24 80 0v50h-80z" fill="#e6e2d9"/>
<ellipse cx="320" cy="318" rx="34" ry="30" fill="#1b191c"/><ellipse cx="312" cy="338" rx="21" ry="20" fill="#f7e3d2"/><path d="M290 322q22 4 44-4l-4-10h-38z" fill="#1b191c"/><circle cx="304" cy="338" r="2.500" fill="#222"/><circle cx="320" cy="338" r="2.500" fill="#222"/>
<circle cx="304" cy="346" r="5" fill="#f2b7a8"/>
</g>
<circle cx="292" cy="285" r="268" fill="none" stroke="#e8e2d8" stroke-width="3" opacity=".5"/>
</svg>
<!-- mic bubble -->
<div class="abs" style="left:1024.400px;top:90.900px;width:26.800px;height:26.600px;border-radius:13.400px;background:rgba(118,121,131,.9)"></div>
<svg style="left:1024px;top:90px" width="28" height="28" viewBox="1024 90 28 28"><rect x="1033.900" y="94.400" width="7.800" height="14.200" rx="3.900" fill="#fff"/><path d="M1030.900 104.500a6.900 6.900 0 0 0 13.800 0M1037.800 111.400v2.900" fill="none" stroke="#fff" stroke-width="2.200"/></svg>
<!-- name pill -->
<div class="abs" style="left:1009.800px;top:120.200px;width:56.200px;height:28.300px;border-radius:14.150px;background:rgba(66,66,67,.88)"></div>
<div class="t" style="left:1022.200px;top:127px;font-size:15.800px;font-weight:300;color:#fff">西米</div>

<!-- muted mic bubble -->
<div class="abs" style="left:1044.500px;top:471.500px;width:66px;height:66px;border-radius:33px;background:rgba(102,103,106,.92)"></div>
<svg style="left:1060px;top:484px" width="36" height="42" viewBox="1060 484 36 42"><rect x="1071.300" y="486.800" width="12.500" height="26" rx="6.250" fill="#f6f6f6"/><path d="M1066.300 503q0 11.200 11.250 11.200T1088.800 503M1077.550 514.500V520.500M1070 521.400h15" fill="none" stroke="#f6f6f6" stroke-width="2.100" stroke-linecap="round"/><path d="M1063 519L1092 490.500" stroke="#e8978a" stroke-width="2.200"/></svg>

<div class="abs" id="edgeT"></div>
<div class="abs" id="edgeB"></div>
<div class="abs" id="edgeL"></div>
<div class="abs" id="edgeR"></div>
</body>
</html>
